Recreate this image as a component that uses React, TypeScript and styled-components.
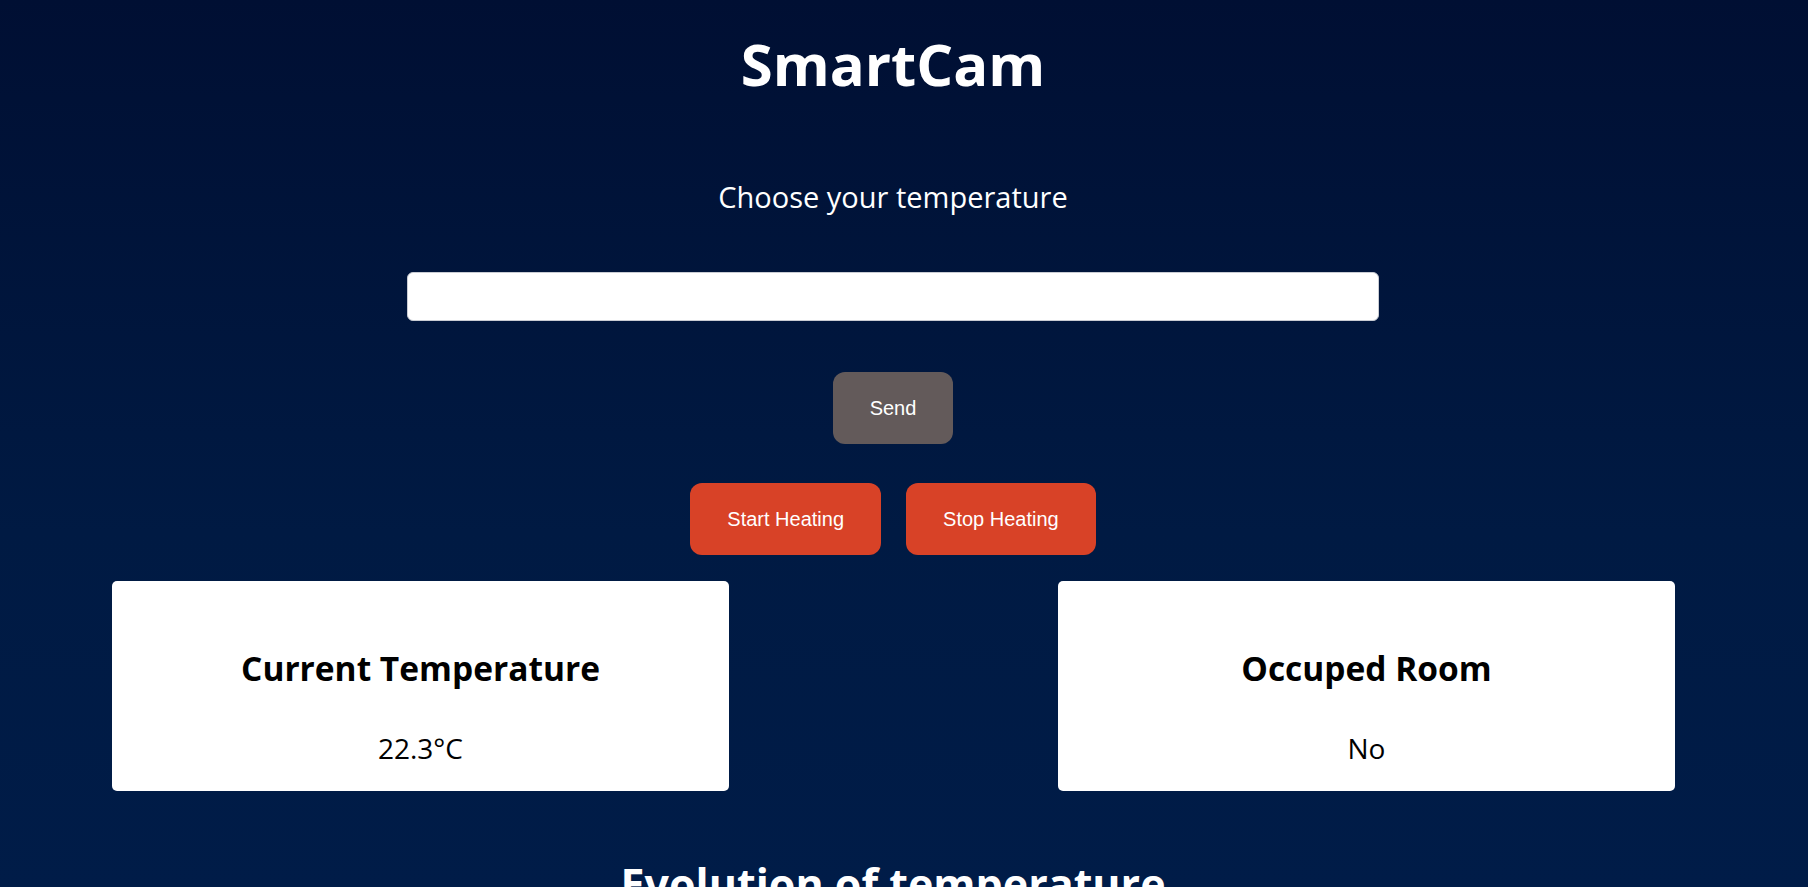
import React, { useState } from "react";
import styled, { createGlobalStyle } from "styled-components";

const GlobalStyle = createGlobalStyle`
  html, body {
    margin: 0;
    padding: 0;
    background: #001c47;
  }
  * { box-sizing: border-box; }
`;

const Page = styled.div`
  min-height: 100vh;
  padding: 28px 22px 120px 0;
  display: flex;
  flex-direction: column;
  align-items: center;
  background-color: #001c47;
  background-image: linear-gradient(180deg, #000f33 0%, #001a43 60%, #001c48 100%);
  background-size: 100% 887px;
  background-repeat: no-repeat;
  font-family: "Open Sans", "Noto Sans", sans-serif;
  color: #ffffff;
`;

const Title = styled.h1`
  margin: 0;
  font-size: 58px;
  line-height: 72px;
  font-weight: 700;
  color: #ffffff;
`;

const Subtitle = styled.h2`
  margin: 77px 0 0;
  font-size: 29px;
  line-height: 40px;
  font-weight: 400;
  color: #ffffff;
`;

const TempInput = styled.input`
  margin-top: 55px;
  width: 972px;
  height: 49px;
  border: 1px solid #c9ccd3;
  border-radius: 6px;
  background: #ffffff;
  padding: 0 12px;
  font-size: 20px;
  font-family: "Liberation Sans", Arial, sans-serif;
  outline: none;
`;

const Button = styled.button<{ $variant: "send" | "heat" }>`
  height: 72px;
  padding: 0 37px;
  border: none;
  border-radius: 12px;
  background: ${(p) => (p.$variant === "send" ? "#635a5a" : "#d84227")};
  color: #ffffff;
  font-family: "Liberation Sans", Arial, sans-serif;
  font-size: 20px;
  cursor: pointer;
`;

const SendRow = styled.div`
  margin-top: 51px;
  display: flex;
  justify-content: center;
`;

const HeatRow = styled.div`
  margin-top: 39px;
  display: flex;
  gap: 25px;
  justify-content: center;
`;

const CardsRow = styled.div`
  margin-top: 26px;
  width: 100%;
  padding: 0 111px 0 112px;
  display: flex;
  justify-content: space-between;
`;

const Card = styled.div`
  width: 617px;
  height: 210px;
  background: #ffffff;
  border-radius: 5px;
  padding-top: 67px;
  display: flex;
  flex-direction: column;
  align-items: center;
  color: #000000;
`;

const CardTitle = styled.h3`
  margin: 0;
  font-size: 33.5px;
  line-height: 40px;
  font-weight: 700;
`;

const CardValue = styled.p`
  margin: 42px 0 0;
  font-size: 28px;
  line-height: 36px;
  font-weight: 400;
`;

const SectionTitle = styled.h2`
  margin: 66px 0 0;
  font-size: 43px;
  line-height: 54px;
  font-weight: 700;
  color: #ffffff;
`;

export default function App() {
  const [temp, setTemp] = useState("");
  return (
    <>
      <GlobalStyle />
      <Page>
        <Title>SmartCam</Title>
        <Subtitle>Choose your temperature</Subtitle>
        <TempInput
          type="text"
          value={temp}
          onChange={(e) => setTemp(e.target.value)}
        />
        <SendRow>
          <Button $variant="send">Send</Button>
        </SendRow>
        <HeatRow>
          <Button $variant="heat">Start Heating</Button>
          <Button $variant="heat">Stop Heating</Button>
        </HeatRow>
        <CardsRow>
          <Card>
            <CardTitle>Current Temperature</CardTitle>
            <CardValue>22.3°C</CardValue>
          </Card>
          <Card>
            <CardTitle>Occuped Room</CardTitle>
            <CardValue>No</CardValue>
          </Card>
        </CardsRow>
        <SectionTitle>Evolution of temperature</SectionTitle>
      </Page>
    </>
  );
}
